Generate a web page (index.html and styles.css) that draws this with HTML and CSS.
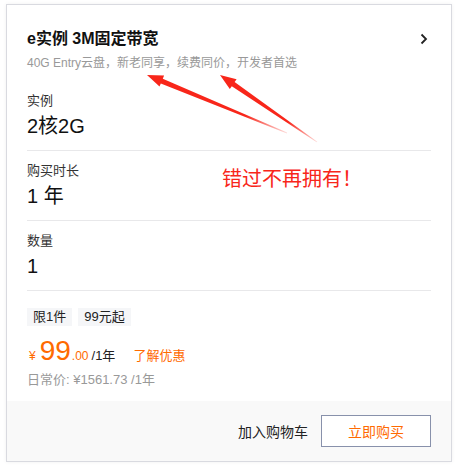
FILE: index.html
```html
<!DOCTYPE html>
<html lang="zh">
<head>
<meta charset="utf-8">
<link rel="stylesheet" href="styles.css">
</head>
<body>
<div class="card">
  <div class="body">
    <div class="header">
      <div class="title-row">
        <div class="title">e实例 3M固定带宽</div>
        <svg class="chev" width="8" height="12" viewBox="0 0 8 12"><path d="M1.5 1.5 L6 6 L1.5 10.5" fill="none" stroke="#222" stroke-width="1.8"/></svg>
      </div>
      <div class="subtitle">40G Entry云盘，新老同享，续费同价，开发者首选</div>
    </div>
    <div class="section">
      <div class="label">实例</div>
      <div class="value">2核2G</div>
    </div>
    <div class="section">
      <div class="label">购买时长</div>
      <div class="value">1 年</div>
    </div>
    <div class="section">
      <div class="label">数量</div>
      <div class="value">1</div>
    </div>
    <div class="price-area">
      <div class="tags"><span class="tag">限1件</span><span class="tag">99元起</span></div>
      <div class="price-row">
        <span class="yen">¥</span><span class="big">99</span><span class="cents">.00</span><span class="unit">/1年</span><span class="promo">了解优惠</span>
      </div>
      <div class="regular">日常价: ¥1561.73 /1年</div>
    </div>
  </div>
  <div class="footer">
    <span class="cart">加入购物车</span>
    <span class="buy">立即购买</span>
  </div>
</div>
<div class="note">错过不再拥有！</div>
<svg class="arrows" width="459" height="468" viewBox="0 0 459 468">
  <defs>
    <linearGradient id="g1" gradientUnits="userSpaceOnUse" x1="147" y1="75" x2="287" y2="133">
      <stop offset="0" stop-color="#f8261a"/>
      <stop offset="0.7" stop-color="#f8261a"/>
      <stop offset="1" stop-color="#f8261a" stop-opacity="0.15"/>
    </linearGradient>
    <linearGradient id="g2" gradientUnits="userSpaceOnUse" x1="220" y1="75" x2="317" y2="142">
      <stop offset="0" stop-color="#f8261a"/>
      <stop offset="0.7" stop-color="#f8261a"/>
      <stop offset="1" stop-color="#f8261a" stop-opacity="0.15"/>
    </linearGradient>
  </defs>
  <polygon fill="url(#g1)" points="147,75 164.1,75.6 162.8,78.8 287.1,132.6 286.9,133.4 160.8,83.4 159.5,86.6"/>
  <polygon fill="url(#g2)" points="220,75 236.6,79.2 234.6,82.0 317.3,141.7 316.7,142.3 231.8,86.2 229.8,89.0"/>
</svg>
</body>
</html>
```

FILE: styles.css
```css
html, body {
  margin: 0;
  padding: 0;
  background: #fff;
}
body {
  font-family: "Liberation Sans", Arial, "Noto Sans CJK SC", sans-serif;
  color: #1a1a1a;
  position: relative;
  width: 459px;
  height: 468px;
  overflow: hidden;
}
.card {
  margin: 4px 0 0 6px;
  width: 444px;
  height: 456px;
  border: 1px solid #d9dae0;
  box-shadow: 0 0 4px rgba(0, 0, 0, 0.06);
  display: flex;
  flex-direction: column;
  background: #fff;
}
.body {
  flex: 1;
  padding: 0 20px;
}
.header {
  padding: 22px 0 9px;
}
.title-row {
  display: flex;
  align-items: center;
  justify-content: space-between;
  height: 24px;
}
.title {
  font-size: 16px;
  font-weight: bold;
  line-height: 24px;
  color: #111;
}
.chev {
  margin-right: 3px;
  margin-top: 0px;
}
.subtitle {
  margin-top: 3px;
  font-size: 12px;
  line-height: 18px;
  color: #999;
}
.section {
  padding: 10px 0;
  border-bottom: 1px solid #e8e8ea;
}
.label {
  font-size: 13px;
  line-height: 20px;
  color: #333;
}
.value {
  margin-top: 1px;
  font-size: 20px;
  line-height: 28px;
  color: #111;
}
.price-area {
  padding-top: 17px;
}
.tags {
  display: flex;
  gap: 6px;
}
.tag {
  background: #f5f6f8;
  font-size: 13px;
  line-height: 18px;
  height: 18px;
  padding: 0 6px;
  color: #222;
}
.price-row {
  display: flex;
  align-items: baseline;
  height: 32px;
  margin-top: 9px;
  line-height: 32px;
}
.yen {
  color: #ff6a00;
  font-size: 12px;
  margin-left: 2px;
  margin-right: 4px;
}
.big {
  color: #ff6a00;
  font-size: 28px;
}
.cents {
  color: #ff6a00;
  font-size: 12px;
  margin-left: 1px;
}
.unit {
  font-size: 13px;
  color: #222;
  margin-left: 3px;
}
.promo {
  font-size: 13px;
  color: #ff6a00;
  margin-left: 18px;
}
.regular {
  margin-top: 3px;
  font-size: 13px;
  line-height: 20px;
  color: #999;
}
.footer {
  height: 60px;
  background: #f9f9f9;
  display: flex;
  align-items: center;
  justify-content: flex-end;
  padding: 0 20px;
}
.cart {
  font-size: 14px;
  color: #222;
  margin-right: 13px;
}
.buy {
  box-sizing: border-box;
  width: 110px;
  height: 32px;
  border: 1px solid #8891ab;
  color: #ff6a00;
  font-size: 14px;
  display: flex;
  align-items: center;
  justify-content: center;
  background: #fff;
}
.note {
  position: absolute;
  left: 222px;
  top: 165px;
  font-size: 20px;
  line-height: 28px;
  color: #f8261a;
}
.arrows {
  position: absolute;
  left: 0;
  top: 0;
  pointer-events: none;
}
```
